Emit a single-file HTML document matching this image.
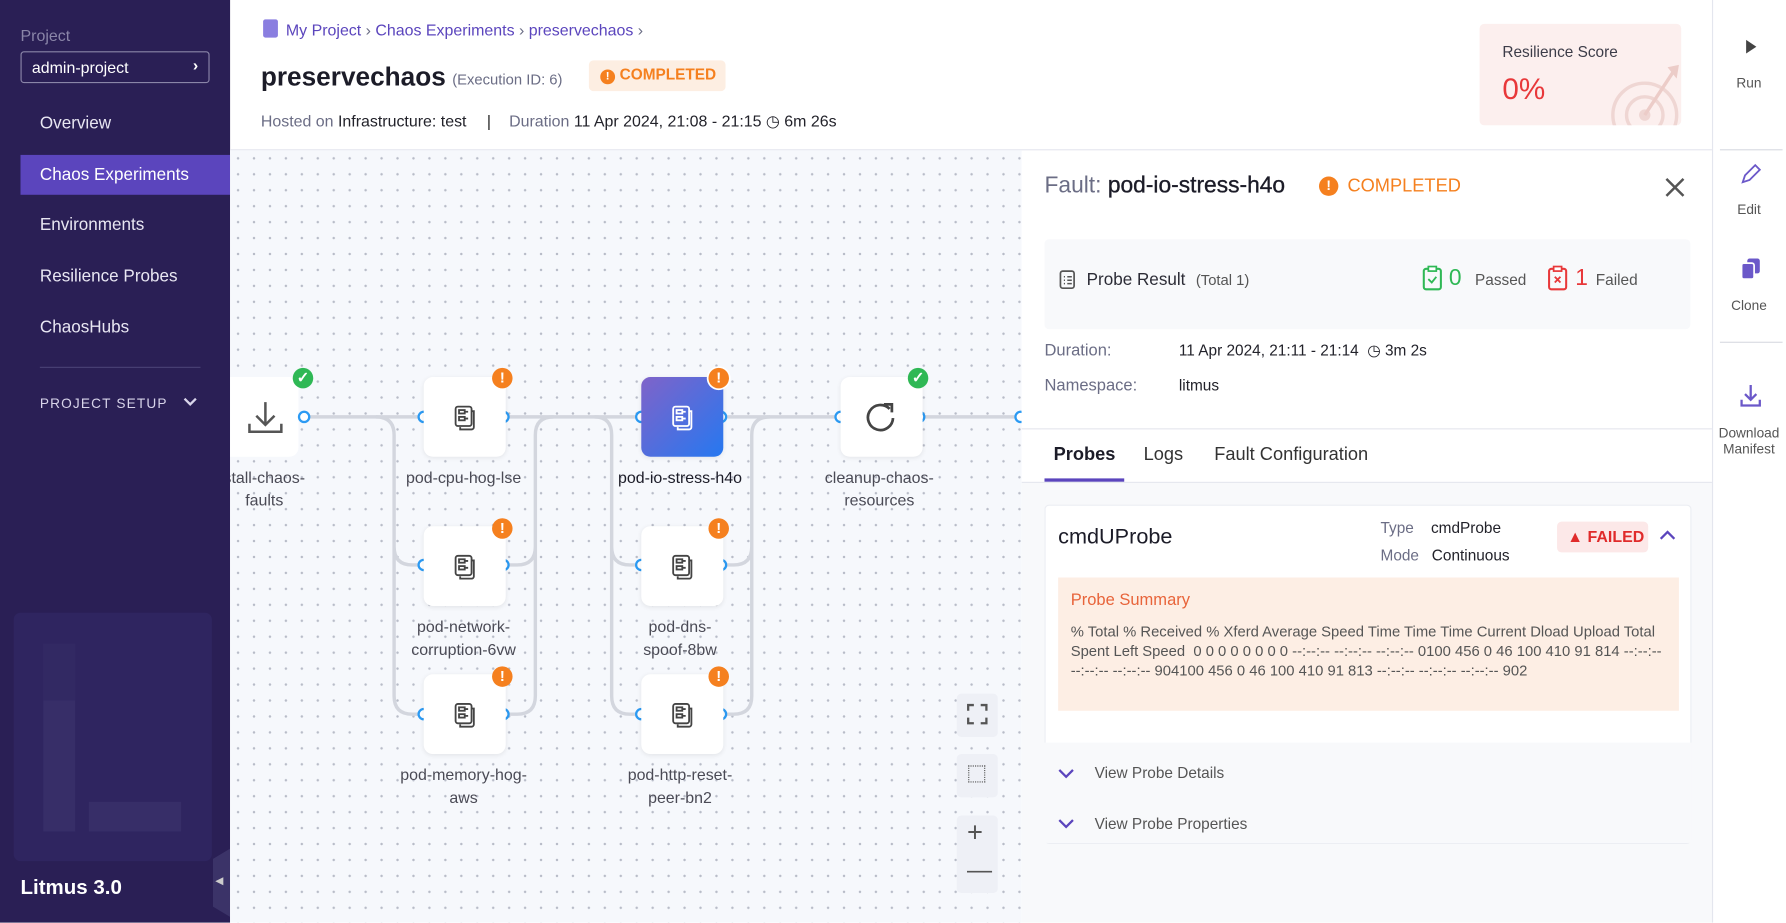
<!DOCTYPE html>
<html><head><meta charset="utf-8">
<style>
*{box-sizing:border-box;margin:0;padding:0}
html,body{width:1786px;height:923px;overflow:hidden;background:#fff}
#w{width:1568px;height:810px;transform:scale(1.13903);transform-origin:0 0;position:relative;font-family:"Liberation Sans",sans-serif;color:#22222a}
.a{position:absolute}
#sb{left:0;top:0;width:202px;height:810px;background:#2a1f55;color:#fff}
.nav{position:absolute;left:35px;font-size:15px;color:#e8e6f2}
#canvas{left:202px;top:132px;width:695px;height:678px;background-color:#f6f8fc;background-image:radial-gradient(#b8bcc8 1px,transparent 1.2px);background-size:14px 14px}
.node{position:absolute;width:72px;height:70px;background:#fff;border-radius:8px;box-shadow:0 1px 4px rgba(0,0,0,.08)}
.lbl{position:absolute;width:140px;text-align:center;font-size:14px;color:#4a4a55;line-height:19.5px}
.badge{position:absolute;width:18px;height:18px;border-radius:50%;background:#f5801f;color:#fff;font-weight:bold;font-size:13px;text-align:center;line-height:18px}
.ok{background:#2fb855}
.muted{color:#6b6d85}
</style></head><body><div id="w">

<div id="sb" class="a">
 <div class="a" style="left:18px;top:23px;font-size:14px;color:#8a85a8">Project</div>
 <div class="a" style="left:18px;top:45px;width:166px;height:28px;border:1px solid #8a85a8;border-radius:3px;font-size:14px;padding:5px 9px;color:#fff">admin-project<span style="position:absolute;right:9px;top:3px;font-weight:bold">›</span></div>
 <div class="nav" style="top:100px">Overview</div>
 <div class="a" style="left:18px;top:136px;width:184px;height:35px;background:#5b45bd"></div>
 <div class="nav" style="top:145px;color:#fff">Chaos Experiments</div>
 <div class="nav" style="top:189px">Environments</div>
 <div class="nav" style="top:234px">Resilience Probes</div>
 <div class="nav" style="top:279px">ChaosHubs</div>
 <div class="a" style="left:35px;top:322px;width:141px;height:1px;background:#4a4275"></div>
 <div class="a" style="left:35px;top:347px;font-size:12px;letter-spacing:1px;color:#d8d4ea">PROJECT SETUP</div>
 <svg class="a" style="left:160px;top:348px" width="14" height="10"><path d="M2 2l5 5 5-5" stroke="#d8d4ea" stroke-width="2" fill="none"/></svg>
 <div class="a" style="left:12px;top:538px;width:174px;height:218px;background:#2f2560;border-radius:6px"></div>
 <div class="a" style="left:38px;top:565px;width:28px;height:165px;background:#372e68"></div>
 <div class="a" style="left:38px;top:565px;width:28px;height:50px;background:#322963"></div>
 <div class="a" style="left:78px;top:704px;width:81px;height:26px;background:#372e68"></div>
 <div class="a" style="left:187px;top:745px;width:15px;height:60px;background:#3b3368;clip-path:polygon(100% 0,100% 100%,0 85%,0 15%)"></div>
 <div class="a" style="left:189px;top:768px;font-size:9px;color:#ccc">◀</div>
 <div class="a" style="left:18px;top:769px;font-size:18px;font-weight:bold;color:#fff">Litmus 3.0</div>
</div>

<!-- header -->
<div class="a" style="left:202px;top:0;width:1301px;height:132px;border-bottom:1px solid #e4e6ee"></div>
<div class="a" style="left:231px;top:17px;width:13px;height:16px;background:#8a7ee0;border-radius:2px"></div>
<div class="a" style="left:251px;top:18px;font-size:14px;color:#5b45bd">My Project <span class="muted">›</span> Chaos Experiments <span class="muted">›</span> preservechaos <span class="muted">›</span></div>
<div class="a" style="left:229px;top:54px;font-size:23px;font-weight:bold;color:#1c1c28">preservechaos</div>
<div class="a" style="left:397px;top:62px;font-size:13px;color:#6b6d85">(Execution ID: 6)</div>
<div class="a" style="left:517px;top:53px;width:120px;height:27px;background:#fdeee2;border-radius:4px;color:#f5801f;font-size:13.5px;font-weight:bold;padding:5px 0 0 10px"><span style="display:inline-block;width:13px;height:13px;border-radius:50%;background:#f5801f;color:#fff;font-size:10px;text-align:center;line-height:13px;margin-right:4px">!</span>COMPLETED</div>
<div class="a" style="left:229px;top:98px;font-size:14px"><span class="muted">Hosted on</span> Infrastructure: test <span style="margin:0 12px 0 14px;color:#222">|</span> <span class="muted">Duration</span> 11 Apr 2024, 21:08 - 21:15 ◷ 6m 26s</div>
<div class="a" style="left:1299px;top:21px;width:177px;height:89px;background:#fcefee;border-radius:4px;overflow:hidden">
 <div class="a" style="left:20px;top:17px;font-size:13.5px;color:#3c3c48">Resilience Score</div>
 <div class="a" style="left:20px;top:42px;font-size:26px;color:#e8383a">0%</div>
 <svg class="a" style="left:115px;top:30px" width="62" height="60"><circle cx="30" cy="50" r="28" fill="none" stroke="#efd6d3" stroke-width="3"/><circle cx="30" cy="50" r="16" fill="none" stroke="#efd6d3" stroke-width="3"/><circle cx="30" cy="50" r="5" fill="#efd6d3"/><path d="M30 50L55 12" stroke="#ecccc8" stroke-width="3"/><path d="M50 8l10 -2 -2 12z" fill="#ecccc8"/></svg>
</div>

<!-- canvas -->
<div id="canvas" class="a" style="overflow:hidden">
<svg class="a" style="left:0;top:0" width="695" height="678" viewBox="202 132 695 678">
<g fill="none" stroke="#d3d6de" stroke-width="3">
<path d="M267 366H372M442 366H563M633 366H738M807 366H897"/>
<path d="M330 366q16 0 16 16V611q0 16 16 16h10M346 480q0 16 16 16h10"/>
<path d="M442 496h12q16 0 16-16V382q0-16 16-16M442 627h12q16 0 16-16V480"/>
<path d="M522 366q15 0 15 16V611q0 16 16 16h10M537 480q0 16 16 16h10"/>
<path d="M633 496h11q16 0 16-16V382q0-16 16-16M633 627h11q16 0 16-16V480"/>
</g>
<rect x="190" y="331" width="72" height="70" rx="8" fill="#fff"/>
<path d="M233 353v19M225 365l8 8 8-8M219 372v7h28v-7" stroke="#555" stroke-width="2.2" fill="none"/>
<g fill="#fff" stroke="#2b9af3" stroke-width="2">
<circle cx="267" cy="366" r="4.5"/><circle cx="372" cy="366" r="4.5"/><circle cx="442" cy="366" r="4.5"/><circle cx="563" cy="366" r="4.5"/><circle cx="633" cy="366" r="4.5"/><circle cx="738" cy="366" r="4.5"/><circle cx="807" cy="366" r="4.5"/><circle cx="896" cy="366" r="4.5"/>
<circle cx="372" cy="496" r="4.5"/><circle cx="442" cy="496" r="4.5"/><circle cx="563" cy="496" r="4.5"/><circle cx="633" cy="496" r="4.5"/>
<circle cx="372" cy="627" r="4.5"/><circle cx="442" cy="627" r="4.5"/><circle cx="563" cy="627" r="4.5"/><circle cx="633" cy="627" r="4.5"/>
</g>
</svg>
<div class="lbl" style="left:-40px;top:278px">stall-chaos-<br>faults</div>
</div>

<div class="badge ok" style="left:257px;top:323px">✓</div>

<div class="node" style="left:372px;top:331px"></div>
<div class="node" style="left:372px;top:462px"></div>
<div class="node" style="left:372px;top:592px"></div>
<div class="node" style="left:563px;top:331px;background:linear-gradient(135deg,#7f63c9,#2678f0)"></div>
<div class="node" style="left:563px;top:462px"></div>
<div class="node" style="left:563px;top:592px"></div>
<div class="node" style="left:738px;top:331px"></div>
<svg class="a" style="left:757px;top:350px" width="32" height="32"><path d="M24 9A11 11 0 1 0 27 17" stroke="#444" stroke-width="2.4" fill="none"/><path d="M19 5h7v7" stroke="#444" stroke-width="2.4" fill="none"/></svg>

<svg width="0" height="0" style="position:absolute"><defs><g id="ic" fill="none" stroke-width="1.6"><rect x="3" y="2" width="14" height="17" rx="2"/><path d="M17 6h2v14a2 2 0 0 1-2 2H7v-2"/><rect x="6" y="5" width="5" height="3"/><rect x="6" y="11" width="5" height="3"/><path d="M11 6.5h3M11 12.5h3"/></g></defs></svg>
<svg class="a" style="left:397px;top:355px" width="24" height="24" stroke="#444"><use href="#ic"/></svg>
<svg class="a" style="left:397px;top:486px" width="24" height="24" stroke="#444"><use href="#ic"/></svg>
<svg class="a" style="left:397px;top:616px" width="24" height="24" stroke="#444"><use href="#ic"/></svg>
<svg class="a" style="left:588px;top:355px" width="24" height="24" stroke="#fff"><use href="#ic"/></svg>
<svg class="a" style="left:588px;top:486px" width="24" height="24" stroke="#444"><use href="#ic"/></svg>
<svg class="a" style="left:588px;top:616px" width="24" height="24" stroke="#444"><use href="#ic"/></svg>

<div class="badge" style="left:432px;top:323px">!</div>
<div class="badge" style="left:432px;top:455px">!</div>
<div class="badge" style="left:432px;top:585px">!</div>
<div class="badge" style="left:622px;top:323px;box-shadow:0 0 0 1.5px #fff">!</div>
<div class="badge" style="left:622px;top:455px">!</div>
<div class="badge" style="left:622px;top:585px">!</div>
<div class="badge ok" style="left:797px;top:323px">✓</div>

<div class="lbl" style="left:337px;top:410px">pod-cpu-hog-lse</div>
<div class="lbl" style="left:337px;top:541px">pod-network-<br>corruption-6vw</div>
<div class="lbl" style="left:337px;top:671px">pod-memory-hog-<br>aws</div>
<div class="lbl" style="left:527px;top:410px;color:#1c1c28">pod-io-stress-h4o</div>
<div class="lbl" style="left:527px;top:541px">pod-dns-<br>spoof-8bw</div>
<div class="lbl" style="left:527px;top:671px">pod-http-reset-<br>peer-bn2</div>
<div class="lbl" style="left:702px;top:410px">cleanup-chaos-<br>resources</div>

<div class="a" style="left:840px;top:609px;width:36px;height:38px;background:#eef0f6;border-radius:4px"></div>
<svg class="a" style="left:848px;top:617px" width="20" height="20"><path d="M2 7V2h5M13 2h5v5M18 13v5h-5M7 18H2v-5" stroke="#555" stroke-width="2" fill="none"/></svg>
<div class="a" style="left:840px;top:662px;width:36px;height:38px;background:#eef0f6;border-radius:4px"></div>
<div class="a" style="left:850px;top:672px;width:15px;height:15px;border:1.5px dotted #555"></div>
<div class="a" style="left:840px;top:716px;width:36px;height:68px;background:#eef0f6;border-radius:4px"></div>
<div class="a" style="left:849px;top:718px;font-size:24px;color:#555">+</div>
<div class="a" style="left:849px;top:751px;font-size:22px;color:#555">—</div>

<!-- right panel -->
<div class="a" style="left:897px;top:133px;width:606px;height:677px;background:#fff"></div>
<div class="a" style="left:917px;top:152px;font-size:20px"><span class="muted">Fault:</span> <span style="color:#1c1c28;-webkit-text-stroke:0.3px #1c1c28">pod-io-stress-h4o</span></div>
<div class="a" style="left:1158px;top:155px;width:17px;height:17px;border-radius:50%;background:#f5801f;color:#fff;font-weight:bold;font-size:12px;text-align:center;line-height:17px">!</div>
<div class="a" style="left:1183px;top:155px;font-size:16px;color:#f5801f">COMPLETED</div>
<svg class="a" style="left:1461px;top:155px" width="19" height="19"><path d="M2 2l15 15M17 2L2 17" stroke="#555" stroke-width="2.2"/></svg>
<div class="a" style="left:917px;top:210px;width:567px;height:79px;background:#f8f9fb;border-radius:4px"></div>
<svg class="a" style="left:929px;top:236px" width="16" height="18"><rect x="2" y="2" width="12" height="15" rx="2" fill="none" stroke="#555" stroke-width="1.5"/><path d="M5 7h1M8 7h4M5 10h1M8 10h4M5 13h1M8 13h4" stroke="#555" stroke-width="1.3"/></svg>
<div class="a" style="left:954px;top:237px;font-size:15px;color:#2c2c36">Probe Result <span style="font-size:13px;color:#555;margin-left:5px">(Total 1)</span></div>
<svg class="a" style="left:1248px;top:233px" width="20" height="22"><rect x="2" y="3" width="15" height="18" rx="2" fill="none" stroke="#2fb855" stroke-width="1.8"/><rect x="6" y="1" width="7" height="4" fill="#fff" stroke="#2fb855" stroke-width="1.5"/><path d="M6 12l3 3 4-5" stroke="#2fb855" stroke-width="1.6" fill="none"/></svg>
<div class="a" style="left:1272px;top:233px;font-size:20px;color:#2fb855">0</div>
<div class="a" style="left:1295px;top:238px;font-size:13.5px;color:#555">Passed</div>
<svg class="a" style="left:1358px;top:233px" width="20" height="22"><rect x="2" y="3" width="15" height="18" rx="2" fill="none" stroke="#e8383a" stroke-width="1.8"/><rect x="6" y="1" width="7" height="4" fill="#fff" stroke="#e8383a" stroke-width="1.5"/><path d="M7 10l5 5M12 10l-5 5" stroke="#e8383a" stroke-width="1.6"/></svg>
<div class="a" style="left:1383px;top:233px;font-size:20px;color:#e8383a">1</div>
<div class="a" style="left:1401px;top:238px;font-size:13.5px;color:#555">Failed</div>
<div class="a" style="left:917px;top:300px;font-size:14.5px;color:#6b6d85">Duration:</div>
<div class="a" style="left:1035px;top:300px;font-size:13.5px">11 Apr 2024, 21:11 - 21:14 &nbsp;◷ 3m 2s</div>
<div class="a" style="left:917px;top:331px;font-size:14.5px;color:#6b6d85">Namespace:</div>
<div class="a" style="left:1035px;top:331px;font-size:13.5px">litmus</div>
<div class="a" style="left:897px;top:376px;width:606px;height:1px;background:#e4e6ee"></div>
<div class="a" style="left:925px;top:391px;font-size:16px;font-weight:bold;color:#1c1c28">Probes</div>
<div class="a" style="left:1004px;top:391px;font-size:16px;color:#333">Logs</div>
<div class="a" style="left:1066px;top:391px;font-size:16px;color:#333">Fault Configuration</div>
<div class="a" style="left:917px;top:420px;width:70px;height:3px;background:#5b45bd"></div>
<div class="a" style="left:897px;top:423px;width:606px;height:1px;background:#e4e6ee"></div>
<div class="a" style="left:897px;top:424px;width:606px;height:386px;background:#f8f9fb"></div>
<div class="a" style="left:917px;top:443px;width:568px;height:298px;background:#fff;border:1px solid #eceef3;border-radius:4px"></div>
<div class="a" style="left:929px;top:461px;font-size:19px;color:#1c1c28">cmdUProbe</div>
<div class="a" style="left:1212px;top:452px;font-size:13.5px;line-height:24px"><span class="muted">Type</span>&nbsp;&nbsp;&nbsp; cmdProbe<br><span class="muted">Mode</span>&nbsp;&nbsp; Continuous</div>
<div class="a" style="left:1367px;top:458px;width:80px;height:27px;background:#fce8e8;border-radius:4px;color:#e02b2b;font-size:14px;font-weight:bold;padding:5px 0 0 9px">▲ FAILED</div>
<svg class="a" style="left:1456px;top:464px" width="16" height="12"><path d="M2 9l6-6 6 6" stroke="#5b45bd" stroke-width="2" fill="none"/></svg>
<div class="a" style="left:929px;top:507px;width:545px;height:117px;background:#fdeee4"></div>
<div class="a" style="left:940px;top:519px;font-size:14.5px;color:#e8643a">Probe Summary</div>
<div class="a" style="left:940px;top:546px;width:520px;font-size:13px;line-height:17px;color:#555">% Total % Received % Xferd Average Speed Time Time Time Current Dload Upload Total Spent Left Speed &nbsp;0 0 0 0 0 0 0 0 --:--:-- --:--:-- --:--:-- 0100 456 0 46 100 410 91 814 --:--:-- --:--:-- --:--:-- 904100 456 0 46 100 410 91 813 --:--:-- --:--:-- --:--:-- 902</div>
<div class="a" style="left:917px;top:652px;width:568px;height:88px;background:#f8f9fb"></div>
<svg class="a" style="left:928px;top:673px" width="16" height="12"><path d="M2 3l6 6 6-6" stroke="#5b45bd" stroke-width="2" fill="none"/></svg>
<div class="a" style="left:961px;top:671px;font-size:13.5px;color:#555">View Probe Details</div>
<svg class="a" style="left:928px;top:717px" width="16" height="12"><path d="M2 3l6 6 6-6" stroke="#5b45bd" stroke-width="2" fill="none"/></svg>
<div class="a" style="left:961px;top:716px;font-size:13.5px;color:#555">View Probe Properties</div>

<!-- action bar -->
<div class="a" style="left:1503px;top:0;width:65px;height:810px;background:#fff;border-left:1px solid #e4e6ee"></div>
<svg class="a" style="left:1530px;top:33px" width="14" height="16"><path d="M3 2l9 6-9 6z" fill="#444"/></svg>
<div class="a" style="left:1503px;top:66px;width:65px;text-align:center;font-size:12px;color:#555">Run</div>
<div class="a" style="left:1510px;top:131px;width:55px;height:1px;background:#d8dae2"></div>
<svg class="a" style="left:1526px;top:142px" width="22" height="22"><path d="M4 18l2-6L15 3l4 4-9 9z" stroke="#6b58c9" stroke-width="1.6" fill="none"/></svg>
<div class="a" style="left:1503px;top:177px;width:65px;text-align:center;font-size:12px;color:#555">Edit</div>
<svg class="a" style="left:1527px;top:226px" width="20" height="20"><rect x="7" y="1" width="11" height="13" rx="2" fill="#6b58c9"/><rect x="2" y="5" width="11" height="14" rx="2" fill="#6b58c9" stroke="#fff" stroke-width="1.5"/></svg>
<div class="a" style="left:1503px;top:261px;width:65px;text-align:center;font-size:12px;color:#555">Clone</div>
<div class="a" style="left:1510px;top:300px;width:55px;height:1px;background:#d8dae2"></div>
<svg class="a" style="left:1526px;top:336px" width="22" height="22"><path d="M11 2v13M6 10l5 5 5-5M3 15v5h16v-5" stroke="#6b58c9" stroke-width="2" fill="none"/></svg>
<div class="a" style="left:1503px;top:373px;width:65px;text-align:center;font-size:12px;color:#555;line-height:14px">Download<br>Manifest</div>
</div></body></html>
